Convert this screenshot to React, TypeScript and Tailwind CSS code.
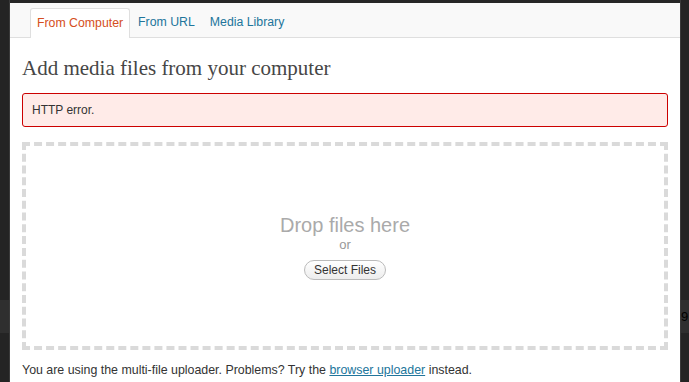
import React from "react";

export default function App() {
  const sans = { fontFamily: '"Liberation Sans", Arial, sans-serif' };
  return (
    <div
      className="w-[689px] h-[382px] bg-[#262626] flex overflow-hidden"
      style={sans}
    >
      {/* left strip */}
      <div className="w-[10px] h-full flex flex-col bg-[#242424] border-r border-[#3a3a3a]">
        <div className="h-[300px]" />
        <div className="h-[33px] bg-[#2f2f2f]" />
      </div>

      {/* main panel */}
      <div className="w-[670px] mt-[3px] bg-white flex flex-col">
        {/* tabs */}
        <div className="h-[35px] bg-[#f9f9f9] border-b border-[#dfdfdf] flex items-end pl-[20px] text-[12px] leading-[28px]">
          <div className="h-[30px] -mb-px bg-white border border-b-0 border-[#dfdfdf] rounded-t-[3px] px-[6px] text-[#d54e21] text-[12.3px]">
            From Computer
          </div>
          <div className="h-[29px] ml-[1px] px-[7px] text-[#21759b] text-[12.3px]">From URL</div>
          <div className="h-[29px] ml-[1px] px-[7px] text-[#21759b] text-[12.3px]">Media Library</div>
        </div>

        <div className="px-[12px] flex flex-col">
          <h3
            className="mt-[18px] text-[21px] leading-[24px] text-[#464646]"
            style={{ fontFamily: '"Liberation Serif", Georgia, serif' }}
          >
            Add media files from your computer
          </h3>

          <div className="mt-[13px] h-[34px] bg-[#ffebe8] border border-[#cc0000] rounded-[3px] pl-[9px] flex items-center text-[12px] text-[#333]">
            HTTP error.
          </div>

          <div className="mt-[15px] h-[208px] border-4 border-dashed border-[#dadada] flex flex-col items-center pt-[67px]">
            <div className="text-[20px] leading-[24px] text-[#aaaaaa]">Drop files here</div>
            <div className="text-[13px] leading-[16px] text-[#999999]">or</div>
            <button className="mt-[7px] h-[20px] px-[9px] rounded-full border border-[#bbbbbb] bg-gradient-to-b from-white to-[#ededed] text-[12px] leading-[18px] text-[#333]">
              Select Files
            </button>
          </div>

          <p className="mt-[12px] text-[12.4px] leading-[16px] text-[#333]">
            You are using the multi-file uploader. Problems? Try the{" "}
            <a className="text-[#21759b] underline" href="#">
              browser uploader
            </a>{" "}
            instead.
          </p>
        </div>
      </div>

      {/* right strip */}
      <div className="w-[9px] h-full flex flex-col bg-[#242424] border-l border-[#3a3a3a]">
        <div className="h-[300px]" />
        <div className="h-[33px] bg-[#2f2f2f] text-[13px] leading-[33px] text-black overflow-hidden whitespace-nowrap">
          91
        </div>
      </div>
    </div>
  );
}
